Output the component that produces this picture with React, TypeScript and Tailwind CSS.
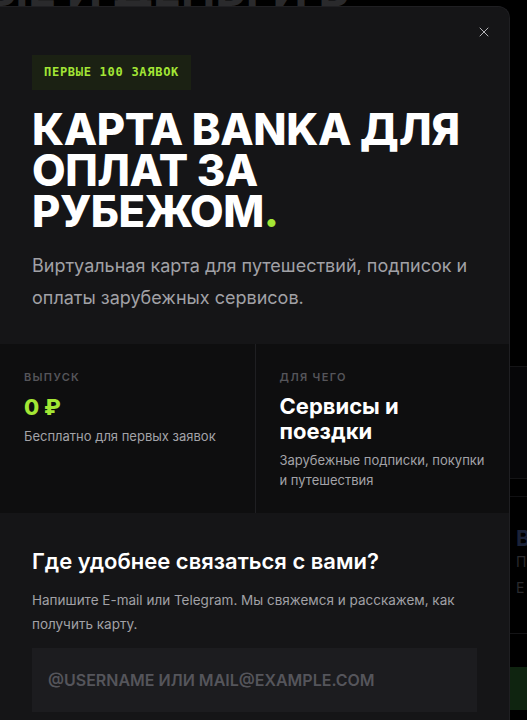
import React from "react";
import { X } from "lucide-react";

// Stat cell inside the dark strip of the card modal
interface StatProps {
  label: string;
  value: React.ReactNode;
  note: string;
  bordered?: boolean;
}

const Stat = ({ label, value, note, bordered }: StatProps) => {
  return (
    <div className={`px-6 pt-[25px] pb-[23px] ${bordered ? "border-l border-[#1f1f22]" : ""}`}>
      <div className="text-[11px] font-semibold uppercase tracking-[0.12em] text-[#55555a]">{label}</div>
      <div className="mt-[8px]">{value}</div>
      <p className="mt-[6px] text-[13px] leading-[20px] text-[#a3a3a8]">{note}</p>
    </div>
  );
};

const App = () => {
  return (
    <div className="relative h-[720px] overflow-hidden bg-black font-['Inter','Noto_Sans',sans-serif]">
      {/* page behind the modal */}
      <div className="-mt-[36px] -ml-[14px] text-[46px] font-bold leading-[50px] text-[#2a2a2c] whitespace-nowrap">
        ЫЕ И ДЕНЬГИ В
      </div>
      <div className="pl-[510px]">
        <div className="mt-[352px] h-[113px] border-y border-[#141416] bg-[#060608]" />
        <div className="mt-[17px] border-t border-[#101012] pt-[30px] pl-[6px]">
          <div className="text-[22px] font-bold leading-[22px] text-[#1a2238]">В</div>
          <div className="text-[14px] leading-[26px] text-[#2a2a2d]">
            П<br />Е
          </div>
        </div>
        <div className="mt-[32px] border-t border-[#141416]" />
        <div className="mt-[33px] h-[43px] bg-[#0f2410]" />
      </div>

      {/* modal */}
      <div className="absolute left-0 top-[6px] w-[510px] rounded-tr-xl border-r border-t border-[#1f1f22] bg-[#151517]">
        <button className="absolute right-[17px] top-[17px] text-[#b4b4b8]">
          <X size={16} strokeWidth={1.5} />
        </button>

        <div className="px-8 pt-[48px] pb-[30px]">
          <span className="inline-block bg-[#1b2113] px-3 py-[11px] font-['DejaVu_Sans_Mono',monospace] text-[12px] font-bold leading-[13px] tracking-[0.06em] text-[#a3e635]">
            ПЕРВЫЕ 100 ЗАЯВОК
          </span>
          <h1 className="mt-[19px] text-[43.5px] font-extrabold uppercase leading-[41px] tracking-[-0.01em] text-white">
            Карта Banka для оплат за рубежом<span className="text-[#a3e635]">.</span>
          </h1>
          <p className="mt-[18px] text-[18px] leading-[32px] text-[#a1a1a6]">
            Виртуальная карта для путешествий, подписок и оплаты зарубежных сервисов.
          </p>
        </div>

        <div className="grid grid-cols-2 bg-[#0e0e0f]">
          <Stat
            label="Выпуск"
            value={<div className="text-[22px] font-extrabold leading-[26px] text-[#a3e635]">0 ₽</div>}
            note="Бесплатно для первых заявок"
          />
          <Stat
            bordered
            label="Для чего"
            value={
              <div className="text-[22px] font-bold leading-[25px] text-white">
                Сервисы и
                <br />
                поездки
              </div>
            }
            note="Зарубежные подписки, покупки и путешествия"
          />
        </div>

        <div className="px-8 pt-[33px] pb-8">
          <h2 className="text-[22px] font-semibold leading-[30px] text-white">Где удобнее связаться с вами?</h2>
          <p className="mt-[12px] text-[13.5px] leading-[24px] text-[#a1a1a6]">
            Напишите E-mail или Telegram. Мы свяжемся и расскажем, как получить карту.
          </p>
          <input
            className="mt-[12px] h-[64px] w-full bg-[#1c1c1f] px-4 text-[16px] font-semibold uppercase text-white outline-none placeholder:text-[#55555b]"
            placeholder="@username или mail@example.com"
          />
        </div>
      </div>
    </div>
  );
};

export default App;
